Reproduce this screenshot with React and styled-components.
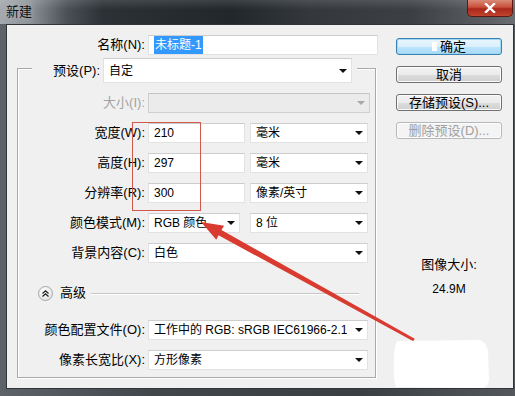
import React from "react";
import styled, { createGlobalStyle } from "styled-components";

const GlobalStyle = createGlobalStyle`
  html, body {
    margin: 0;
    padding: 0;
    background: #2b2f33;
  }
  body {
    font-family: "Liberation Sans", "Noto Sans CJK SC", sans-serif;
    font-size: 13px;
    color: #000;
  }
`;

const Window = styled.div`
  position: relative;
  width: 515px;
  height: 396px;
  overflow: hidden;
  display: flex;
  flex-direction: column;
  background: linear-gradient(
    90deg,
    #5d6368,
    #41464b 30%,
    #3a3f44 70%,
    #54585c
  );
`;

const TitleBar = styled.div`
  height: 24px;
  flex-shrink: 0;
  display: flex;
  align-items: flex-start;
  background:
    linear-gradient(180deg, rgba(255, 255, 255, 0.12) 0%, rgba(255, 255, 255, 0) 40%),
    linear-gradient(
      90deg,
      #a3a9ae 0%,
      #8a9095 6%,
      #4a5055 13%,
      #2c3136 20%,
      #22272b 45%,
      #34383c 60%,
      #3c4044 80%,
      #5c6064 95%,
      #6a6e72 100%
    );
`;

const Title = styled.div`
  padding: 3px 0 0 6px;
  line-height: 18px;
  font-size: 13px;
  color: #111;
  text-shadow: 0 0 7px rgba(255, 255, 255, 0.45);
`;

const CloseButton = styled.div`
  margin-left: auto;
  margin-right: 2px;
  width: 46px;
  height: 17px;
  box-sizing: border-box;
  border: 1px solid #5a1a12;
  border-top: none;
  border-radius: 0 0 5px 5px;
  background: linear-gradient(180deg, #d98a78 0%, #c8503b 45%, #a8271a 55%, #c2442e 100%);
  display: flex;
  align-items: center;
  justify-content: center;
`;

const Body = styled.div`
  flex: 1;
  display: flex;
  padding: 0 1px 7px 6px;
`;

const Client = styled.div`
  flex: 1;
  display: flex;
  border: 1px solid #30353a;
  background: #f0f0f0;
  padding: 10px 0 0 10px;
`;

const Main = styled.div`
  width: 362px;
  flex-shrink: 0;
  display: flex;
  flex-direction: column;
`;

const Row = styled.div`
  display: flex;
  align-items: center;
  gap: ${p => p.gap ?? 3}px;
  height: ${p => p.h ?? 20}px;
  margin-top: ${p => p.mt ?? 0}px;
`;

const Label = styled.div`
  width: ${p => p.w}px;
  flex-shrink: 0;
  text-align: right;
  white-space: nowrap;
  line-height: 18px;
  color: ${p => (p.disabled ? "#a3a3a3" : "#000")};
`;

const Field = styled.div`
  width: ${p => p.w}px;
  height: ${p => p.h ?? 20}px;
  flex-shrink: 0;
  box-sizing: border-box;
  display: flex;
  align-items: center;
  padding: 0 4px 0 5px;
  background: ${p => (p.disabled ? "#ebebeb" : "#fff")};
  border: 1px solid ${p => (p.disabled ? "#cfcfcf" : "#e2e2e2")};
  border-top-color: ${p => (p.disabled ? "#c4c4c4" : "#cdcdcd")};
  white-space: nowrap;
  overflow: hidden;
  font-size: 12px;
  line-height: 18px;
`;

const Caret = styled.span`
  margin-left: auto;
  width: 0;
  height: 0;
  flex-shrink: 0;
  border-left: 4px solid transparent;
  border-right: 4px solid transparent;
  border-top: 4px solid ${p => (p.disabled ? "#a8a8a8" : "#111")};
`;

const Text = styled.span`
  overflow: hidden;
  margin-right: 6px;
`;

const Selected = styled.span`
  background: #3399ff;
  color: #fff;
  padding: 0 1px;
`;

const Group = styled.div`
  margin-top: 13px;
  width: 359px;
  box-sizing: border-box;
  border: 1px solid #a9a9a9;
  box-shadow: inset 1px 1px 0 #fff, 1px 1px 0 #fff;
  padding-bottom: 7px;
  display: flex;
  flex-direction: column;
`;

const PresetRow = styled(Row)`
  margin: -11px 0 0 14px;
  width: 325px;
  background: #f0f0f0;
`;

const AdvancedRow = styled(Row)`
  margin-left: 20px;
  margin-right: 16px;
  gap: 7px;
`;

const Toggle = styled.div`
  width: 15px;
  height: 15px;
  box-sizing: border-box;
  border-radius: 50%;
  border: 1px solid #a8a8a8;
  background: radial-gradient(circle at 40% 35%, #ffffff, #e6e6e6 70%, #d0d0d0);
  display: flex;
  align-items: center;
  justify-content: center;
`;

const Rule = styled.div`
  flex: 1;
  height: 1px;
  background: #c6c6c6;
  box-shadow: 0 1px 0 #fff;
`;

const Side = styled.div`
  margin-left: 17px;
  width: 106px;
  padding-top: 3px;
  display: flex;
  flex-direction: column;
  gap: 11px;
`;

const Button = styled.div`
  height: 17px;
  box-sizing: border-box;
  border-radius: 3px;
  display: flex;
  align-items: center;
  justify-content: center;
  gap: 3px;
  font-size: 13px;
  line-height: 15px;
  color: ${p => (p.disabled ? "#a0a0a0" : "#000")};
  border: 1px solid ${p => (p.primary ? "#3c7fb1" : p.disabled ? "#b5b9bc" : "#707070")};
  background: ${p =>
    p.disabled
      ? "#f4f4f4"
      : p.primary
      ? "linear-gradient(180deg, #eaf6fd 0%, #d9f0fc 50%, #bee6fd 51%, #a7d9f5 100%)"
      : "linear-gradient(180deg, #f2f2f2 0%, #ebebeb 50%, #dddddd 51%, #cfcfcf 100%)"};
  box-shadow: ${p => (p.primary ? "inset 0 0 0 1px #9fd8f3" : "inset 0 0 0 1px #fcfcfc")};
`;

const Cursor = styled.span`
  width: 5px;
  height: 9px;
  background: #fff;
`;

const SizeInfo = styled.div`
  margin-top: 106px;
  display: flex;
  flex-direction: column;
  align-items: center;
  gap: 6px;
  line-height: 18px;
`;

const SizeValue = styled.div`
  font-size: 12px;
`;

const Overlay = styled.svg`
  position: absolute;
  left: 0;
  top: 0;
  pointer-events: none;
`;

const Select = ({ w, h, disabled, children }) => (
  <Field w={w} h={h} disabled={disabled}>
    <Text>{children}</Text>
    <Caret disabled={disabled} />
  </Field>
);

export default function App() {
  return (
    <>
      <GlobalStyle />
      <Window>
        <TitleBar>
          <Title>新建</Title>
          <CloseButton>
            <svg width="12" height="10" viewBox="0 0 12 10">
              <path d="M2 1 L10 9 M10 1 L2 9" stroke="#fff" strokeWidth="2.4" strokeLinecap="square" />
            </svg>
          </CloseButton>
        </TitleBar>
        <Body>
          <Client>
            <Main>
              <Row>
                <Label w={128}>名称(N):</Label>
                <Field w={230}>
                  <Selected>未标题-1</Selected>
                </Field>
              </Row>
              <Group>
                <PresetRow h={25}>
                  <Label w={68}>预设(P):</Label>
                  <Select w={249} h={25}>自定</Select>
                </PresetRow>
                <Row mt={10}>
                  <Label w={127} disabled>大小(I):</Label>
                  <Select w={222} disabled />
                </Row>
                <Row mt={10}>
                  <Label w={127}>宽度(W):</Label>
                  <Field w={97}>210</Field>
                  <Row gap={0} style={{ marginLeft: 2 }}>
                    <Select w={118}>毫米</Select>
                  </Row>
                </Row>
                <Row mt={10}>
                  <Label w={127}>高度(H):</Label>
                  <Field w={97}>297</Field>
                  <Row gap={0} style={{ marginLeft: 2 }}>
                    <Select w={118}>毫米</Select>
                  </Row>
                </Row>
                <Row mt={10}>
                  <Label w={127}>分辨率(R):</Label>
                  <Field w={97}>300</Field>
                  <Row gap={0} style={{ marginLeft: 2 }}>
                    <Select w={118}>像素/英寸</Select>
                  </Row>
                </Row>
                <Row mt={10}>
                  <Label w={127}>颜色模式(M):</Label>
                  <Select w={92}>RGB 颜色</Select>
                  <Row gap={0} style={{ marginLeft: 7 }}>
                    <Select w={118}>8 位</Select>
                  </Row>
                </Row>
                <Row mt={10}>
                  <Label w={127}>背景内容(C):</Label>
                  <Select w={220}>白色</Select>
                </Row>
                <AdvancedRow mt={20}>
                  <Toggle>
                    <svg width="9" height="9" viewBox="0 0 9 9">
                      <path d="M1.5 4.5 L4.5 1.8 L7.5 4.5 M1.5 7.5 L4.5 4.8 L7.5 7.5" fill="none" stroke="#222" strokeWidth="1.3" />
                    </svg>
                  </Toggle>
                  <Label w={24}>高级</Label>
                  <Rule />
                </AdvancedRow>
                <Row mt={17}>
                  <Label w={127}>颜色配置文件(O):</Label>
                  <Select w={220}>工作中的 RGB: sRGB IEC61966-2.1</Select>
                </Row>
                <Row mt={10}>
                  <Label w={127}>像素长宽比(X):</Label>
                  <Select w={220}>方形像素</Select>
                </Row>
              </Group>
            </Main>
            <Side>
              <Button primary>
                <Cursor />
                确定
              </Button>
              <Button>取消</Button>
              <Button>存储预设(S)...</Button>
              <Button disabled>删除预设(D)...</Button>
              <SizeInfo>
                <div>图像大小:</div>
                <SizeValue>24.9M</SizeValue>
              </SizeInfo>
            </Side>
          </Client>
        </Body>
        <Overlay width="515" height="396" viewBox="0 0 515 396">
          <rect x="132.5" y="122.5" width="68" height="88" fill="none" stroke="#cf5a4c" strokeWidth="1" />
          <polygon
            points="413.3,341.3 218.5,235.3 216.3,239.7 201,222 224.1,225.7 221.5,230.1 414.7,338.7"
            fill="#d93b30"
          />
          <path
            d="M398 341 L480 340 Q487 342 488 352 L489 380 Q488 388 481 388 L396 387 Q393 380 394 360 Q394 343 398 341 Z"
            fill="#fff"
          />
        </Overlay>
      </Window>
    </>
  );
}
